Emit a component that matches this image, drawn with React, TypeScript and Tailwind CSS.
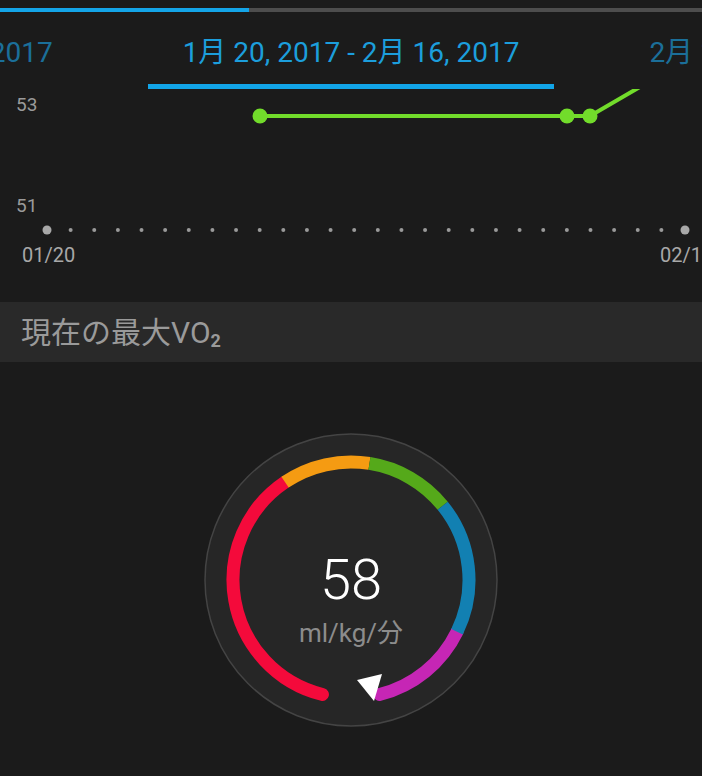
import React from 'react';

const font = { fontFamily: 'Roboto, "Noto Sans CJK JP", sans-serif' };

// angle measured clockwise from 12 o'clock
function arcPath(a0: number, a1: number, r = 118, c = 150) {
  const pt = (a: number) => {
    const t = (a * Math.PI) / 180;
    return [c + r * Math.sin(t), c - r * Math.cos(t)];
  };
  const [x0, y0] = pt(a0);
  const [x1, y1] = pt(a1);
  const large = a1 - a0 > 180 ? 1 : 0;
  return `M${x0} ${y0} A${r} ${r} 0 ${large} 1 ${x1} ${y1}`;
}

function DateStrip() {
  return (
    <div className="flex w-full overflow-hidden whitespace-nowrap pt-6 text-[28px] leading-[34px]">
      <div className="flex min-w-0 flex-1 justify-end">
        <span className="shrink-0 text-[#1b6f99]">12月 23, 2016 - 1月 19, 2017</span>
      </div>
      <span className="mx-[130px] shrink-0 text-[#1c9edc]">1月 20, 2017 - 2月 16, 2017</span>
      <div className="flex min-w-0 flex-1 justify-start">
        <span className="shrink-0 text-[#1b6f99]">2月 17, 2017 - 3月 16, 2017</span>
      </div>
    </div>
  );
}

function Chart() {
  const days = Array.from({ length: 28 }, (_, i) => 47 + (i * 638) / 27);
  return (
    <div className="h-[213px] w-full">
      <svg width="702" height="213" viewBox="0 0 702 213">
        <text x="16" y="22" fontSize="19" fill="#9a9a9a" style={font}>53</text>
        <text x="16" y="123" fontSize="19" fill="#9a9a9a" style={font}>51</text>
        <polyline
          points="260,27 567,27 590,27 700,-37"
          fill="none"
          stroke="#72dc2b"
          strokeWidth="4"
        />
        {[260, 567, 590].map((x) => (
          <circle key={x} cx={x} cy="27" r="7.5" fill="#72dc2b" />
        ))}
        {days.map((x, i) => (
          <circle
            key={i}
            cx={x}
            cy="141"
            r={i === 0 || i === 27 ? 4.5 : 2}
            fill={i === 0 || i === 27 ? '#a8a8a8' : '#9a9a9a'}
          />
        ))}
        <text x="22" y="173" fontSize="20" fill="#a8a8a8" style={font}>01/20</text>
        <text x="660" y="173" fontSize="20" fill="#a8a8a8" style={font}>02/16</text>
      </svg>
    </div>
  );
}

function Gauge() {
  return (
    <div className="relative mx-auto mt-[68px] h-[300px] w-[300px]">
      <svg className="absolute inset-0" width="300" height="300" viewBox="0 0 300 300">
        <circle cx="150" cy="150" r="146" fill="#262626" stroke="#444444" strokeWidth="1.5" />
        <path d={arcPath(194, 326)} fill="none" stroke="#f40a3b" strokeWidth="13" strokeLinecap="round" />
        <path d={arcPath(476, 526)} fill="none" stroke="#c626b5" strokeWidth="13" strokeLinecap="round" />
        <path d={arcPath(326, 369)} fill="none" stroke="#f59b12" strokeWidth="13" />
        <path d={arcPath(369, 411)} fill="none" stroke="#55a91a" strokeWidth="13" />
        <path d={arcPath(411, 476)} fill="none" stroke="#1280b2" strokeWidth="13" />
        <polygon points="156,250 181,244 173,271" fill="#ffffff" />
      </svg>
      <div className="relative flex flex-col items-center pt-[122px]" style={font}>
        <span className="text-[56px] font-light leading-[56px] text-white">58</span>
        <span className="mt-[10px] text-[26px] leading-[30px] text-[#8c8c8c]">ml/kg/分</span>
      </div>
    </div>
  );
}

export default function App() {
  return (
    <div className="h-[776px] w-full overflow-hidden bg-[#1b1b1b]" style={font}>
      {/* page indicator */}
      <div className="mt-2 flex h-1 w-full">
        <div className="w-[249px] bg-[#14a5e8]" />
        <div className="flex-1 bg-[#4d4d4d]" />
      </div>

      <DateStrip />
      <div className="mx-auto mt-[14px] h-[5px] w-[406px] bg-[#12a5e8]" />

      <Chart />

      <div className="flex h-[60px] items-center bg-[#292929] pl-[21px] text-[30px] text-[#9a9a9a]">
        <span>現在の最大VO</span>
        <span className="relative top-[8px] text-[18px] font-bold">2</span>
      </div>

      <Gauge />
    </div>
  );
}
